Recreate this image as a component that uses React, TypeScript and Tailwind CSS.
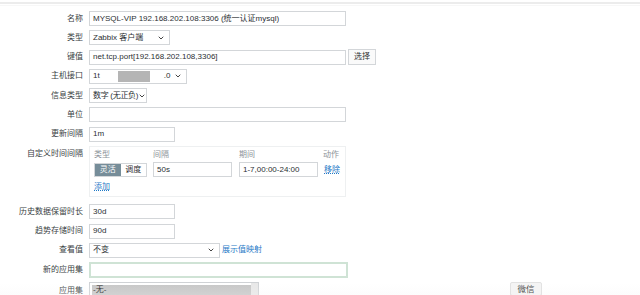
import { ChevronDown } from "lucide-react";

const font = { fontFamily: '"Liberation Sans", "Noto Sans CJK SC", sans-serif' };

const Label = ({ children }: { children: React.ReactNode }) => (
  <div className="w-[83px] shrink-0 text-right text-[8px] text-[#3a3f44] leading-none whitespace-nowrap">{children}</div>
);

const Input = ({ w, value, className = "" }: { w: string; value?: string; className?: string }) => (
  <div className={`${w} h-[15px] shrink-0 border border-[#d3d6d9] bg-white px-[3px] flex items-center text-[8px] text-[#2b2f33] leading-none whitespace-nowrap ${className}`}>
    {value}
  </div>
);

const Select = ({ w, children, className = "" }: { w: string; children: React.ReactNode; className?: string }) => (
  <div className={`${w} h-[15px] shrink-0 border border-[#d3d6d9] bg-white pl-[3px] pr-[4px] flex items-center justify-between text-[8px] text-[#2b2f33] leading-none whitespace-nowrap overflow-hidden ${className}`}>
    <div className="flex items-center">{children}</div>
    <ChevronDown size={8} strokeWidth={3} className="text-[#444] shrink-0" />
  </div>
);

const Row = ({ label, children, className = "" }: { label: string; children: React.ReactNode; className?: string }) => (
  <div className={`flex items-center gap-[6px] h-[15px] ${className}`}>
    <Label>{label}</Label>
    {children}
  </div>
);

export default function App() {
  return (
    <div style={font} className="relative w-[640px] h-[295px] bg-white overflow-hidden">
      <div className="h-[2px] mt-[2px] bg-[#ececec]" />
      <div className="h-px mt-[1px] bg-[#f7f7f7]" />
      <div className="flex flex-col gap-[4.3px] mt-[5px]">
        <Row label="名称">
          <Input w="w-[257px]" value="MYSQL-VIP 192.168.202.108:3306 (统一认证mysql)" />
        </Row>
        <Row label="类型">
          <Select w="w-[81px]">Zabbix 客户端</Select>
        </Row>
        <Row label="键值">
          <Input w="w-[257px]" value="net.tcp.port[192.168.202.108,3306]" />
          <div className="-ml-[4px] h-[16px] px-[5px] border border-[#d3d6d9] bg-[#fafafa] flex items-center text-[8px] text-[#333] leading-none">选择</div>
        </Row>
        <Row label="主机接口">
          <Select w="w-[98px]">
            <span>1t</span>
            <span className="ml-[18px] w-[32px] h-[11px] bg-[#b5b5b5]" />
            <span className="ml-[14px]">.0</span>
          </Select>
        </Row>
        <Row label="信息类型">
          <Select w="w-[58px]" className="pl-[2px] pr-[2px] tracking-[-0.3px]">数字 (无正负)</Select>
        </Row>
        <Row label="单位">
          <Input w="w-[257px]" />
        </Row>
        <Row label="更新间隔">
          <Input w="w-[86px]" value="1m" />
        </Row>
        <div className="flex items-start gap-[6px]">
          <div className="pt-[4px]">
            <Label>自定义时间间隔</Label>
          </div>
          <div className="w-[257px] h-[51px] border border-[#eef0f1] px-[4px] pt-[4px] text-[8px] leading-none text-[#8d9399]">
            <div className="flex">
              <span className="w-[59px]">类型</span>
              <span className="w-[86px]">间隔</span>
              <span className="w-[84px]">期间</span>
              <span>动作</span>
            </div>
            <div className="flex items-center mt-[3px]">
              <div className="flex w-[53px] h-[14px] border border-[#d3d6d9]">
                <div className="flex-1 bg-[#768d99] text-white flex items-center justify-center">灵活</div>
                <div className="flex-1 bg-white text-[#333] flex items-center justify-center">调度</div>
              </div>
              <Input w="w-[79px] ml-[6px]" value="50s" className="h-[14px]" />
              <Input w="w-[79px] ml-[7px]" value="1-7,00:00-24:00" className="h-[14px]" />
              <span className="ml-[6px] text-[#1f7ac7] underline decoration-dotted">移除</span>
            </div>
            <div className="mt-[6px] text-[#1f7ac7] underline decoration-dotted">添加</div>
          </div>
        </div>
        <Row label="历史数据保留时长" className="mt-[3px]">
          <Input w="w-[86px]" value="30d" />
        </Row>
        <Row label="趋势存储时间">
          <Input w="w-[86px]" value="90d" />
        </Row>
        <Row label="查看值">
          <Select w="w-[131px]">不变</Select>
          <span className="-ml-[4px] text-[8px] text-[#1f7ac7] leading-none">展示值映射</span>
        </Row>
        <Row label="新的应用集" className="h-[16px]">
          <div className="w-[259px] h-[16px] border-2 border-[#cfe3d5] bg-white" />
        </Row>
        <div className="flex items-start gap-[6px] -mt-[1px]">
          <div className="pt-[5px]">
            <Label>应用集</Label>
          </div>
          <div className="w-[170px] h-[30px] border border-[#cfd2d5] bg-white flex p-[2px]">
            <div className="flex-1 text-[8px] leading-none text-[#222]">
              <div className="bg-[#c6c6c6] h-[10px] px-[1px] flex items-center">-无-</div>
              <div className="px-[1px] mt-[1px]">ODW</div>
            </div>
            <div className="w-[7px] bg-[#e8e8e8] -my-[2px] -mr-[2px]" />
          </div>
        </div>
      </div>
      <div className="absolute left-0 right-0 bottom-0 h-[12px] bg-gradient-to-b from-[#ffffff00] to-[#f4f4f440] pointer-events-none" />
      <div className="absolute left-[510px] top-[282px] w-[32px] h-[14px] border border-[#e2e2e2] bg-[#f4f4f4] rounded-[2px] flex items-center justify-center text-[8.5px] text-[#555] leading-none">微信</div>
    </div>
  );
}
